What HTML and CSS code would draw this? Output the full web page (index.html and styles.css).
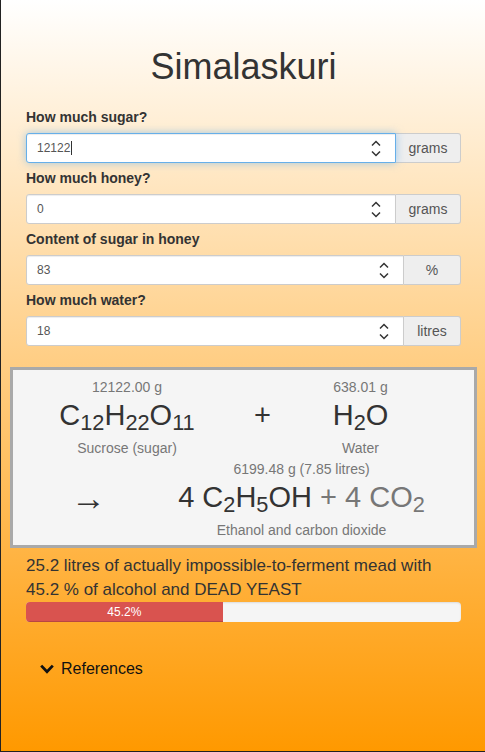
FILE: index.html
```html
<!DOCTYPE html>
<html lang="en">
<head>
<meta charset="utf-8">
<title>Simalaskuri</title>
<link rel="stylesheet" href="styles.css">
</head>
<body>
<div class="page">
  <div class="container">
    <h1 class="title">Simalaskuri</h1>

    <div class="group">
      <label class="label">How much sugar?</label>
      <div class="input-group">
        <div class="field focused">
          <span class="value">12122</span><span class="caret"></span>
          <span class="spacer"></span>
          <svg class="spin" width="10" height="17" viewBox="0 0 10 17"><polyline points="1,5.5 5,1.5 9,5.5"/><polyline points="1,11.5 5,15.5 9,11.5"/></svg>
        </div>
        <div class="addon addon-wide">grams</div>
      </div>
    </div>

    <div class="group">
      <label class="label">How much honey?</label>
      <div class="input-group">
        <div class="field">
          <span class="value">0</span>
          <span class="spacer"></span>
          <svg class="spin" width="10" height="17" viewBox="0 0 10 17"><polyline points="1,5.5 5,1.5 9,5.5"/><polyline points="1,11.5 5,15.5 9,11.5"/></svg>
        </div>
        <div class="addon addon-wide">grams</div>
      </div>
    </div>

    <div class="group">
      <label class="label">Content of sugar in honey</label>
      <div class="input-group">
        <div class="field">
          <span class="value">83</span>
          <span class="spacer"></span>
          <svg class="spin" width="10" height="17" viewBox="0 0 10 17"><polyline points="1,5.5 5,1.5 9,5.5"/><polyline points="1,11.5 5,15.5 9,11.5"/></svg>
        </div>
        <div class="addon">%</div>
      </div>
    </div>

    <div class="group">
      <label class="label">How much water?</label>
      <div class="input-group">
        <div class="field">
          <span class="value">18</span>
          <span class="spacer"></span>
          <svg class="spin" width="10" height="17" viewBox="0 0 10 17"><polyline points="1,5.5 5,1.5 9,5.5"/><polyline points="1,11.5 5,15.5 9,11.5"/></svg>
        </div>
        <div class="addon">litres</div>
      </div>
    </div>

    <div class="well">
      <div class="row row-top">
        <div class="col">
          <div class="amount">12122.00 g</div>
          <div class="formula">C<sub>12</sub>H<sub>22</sub>O<sub>11</sub></div>
          <div class="name">Sucrose (sugar)</div>
        </div>
        <div class="col">
          <div class="amount">&nbsp;</div>
          <div class="formula">+</div>
        </div>
        <div class="col">
          <div class="amount">638.01 g</div>
          <div class="formula">H<sub>2</sub>O</div>
          <div class="name">Water</div>
        </div>
      </div>
      <div class="row row-bottom">
        <div class="col">
          <div class="amount">&nbsp;</div>
          <div class="formula arrow">&rarr;</div>
        </div>
        <div class="col">
          <div class="amount">6199.48 g (7.85 litres)</div>
          <div class="formula">4 C<sub>2</sub>H<sub>5</sub>OH <span class="muted">+ 4 CO<sub>2</sub></span></div>
          <div class="name">Ethanol and carbon dioxide</div>
        </div>
      </div>
    </div>

    <p class="result">25.2 litres of actually impossible-to-ferment mead with 45.2 % of alcohol and DEAD YEAST</p>

    <div class="progress">
      <div class="bar" style="width: 45.2%">45.2%</div>
    </div>

    <div class="refs">
      <svg class="chevron" width="14" height="10" viewBox="0 0 14 10"><polyline points="1.2,1.6 7,7.8 12.8,1.6"/></svg>
      <span>References</span>
    </div>
  </div>
</div>
</body>
</html>
```

FILE: styles.css
```css
* {
  box-sizing: border-box;
}

html, body {
  margin: 0;
  padding: 0;
}

body {
  font-family: "Liberation Sans", Arial, sans-serif;
  color: #333;
  font-size: 14px;
  line-height: 20px;
}

.page {
  min-height: 752px;
  height: 752px;
  background: linear-gradient(to bottom, #ffffff 0%, #ff9900 100%);
  border-left: 1px solid #222;
  border-bottom: 1px solid #222;
  overflow: hidden;
}

.container {
  padding: 0 24px 0 25px;
}

.title {
  margin: 47px 0 20px;
  font-size: 36px;
  line-height: 40px;
  font-weight: 500;
  text-align: center;
  color: #333;
}

.group {
  margin-bottom: 5px;
}

.label {
  display: block;
  font-weight: bold;
  font-size: 14px;
  line-height: 20px;
  margin-bottom: 6px;
  color: #333;
}

.input-group {
  display: flex;
  height: 30px;
}

.field {
  flex: 1;
  display: flex;
  align-items: center;
  background: #fff;
  border: 1px solid #ccc;
  border-radius: 3px 0 0 3px;
  padding: 0 14px 0 10px;
  font-size: 12px;
  color: #555;
  box-shadow: inset 0 1px 1px rgba(0, 0, 0, 0.075);
}

.field.focused {
  border-color: #66afe9;
  box-shadow: inset 0 1px 1px rgba(0, 0, 0, 0.075), 0 0 8px rgba(102, 175, 233, 0.6);
  position: relative;
  z-index: 1;
}

.caret {
  display: inline-block;
  width: 1px;
  height: 14px;
  background: #333;
  margin-left: 1px;
}

.spacer {
  flex: 1;
}

.spin {
  display: block;
  fill: none;
  stroke: #333;
  stroke-width: 1.5;
}

.addon {
  width: 57px;
  display: flex;
  align-items: center;
  justify-content: center;
  background: #eee;
  border: 1px solid #ccc;
  border-left: 0;
  border-radius: 0 3px 3px 0;
  color: #555;
  font-size: 14px;
}

.addon-wide {
  width: 65px;
}

.well {
  margin: 21px -16px 0;
  background: #f5f5f5;
  border: 3px solid #a9a9a9;
  padding: 7px 0 5px;
}

.row {
  display: grid;
}

.row-top {
  grid-template-columns: 228px 43px 153px;
  margin-bottom: 1px;
}

.row-bottom {
  grid-template-columns: 151px 275px;
}

.col {
  text-align: center;
}

.amount,
.name {
  font-size: 14px;
  line-height: 20px;
  color: #777;
  white-space: nowrap;
}

.formula {
  font-size: 29px;
  line-height: 37px;
  margin-bottom: 4px;
  color: #333;
  white-space: nowrap;
}

.formula.arrow {
  font-size: 35px;
}

.formula sub {
  font-size: 75%;
  line-height: 0;
  position: relative;
  vertical-align: baseline;
  bottom: -0.25em;
}

.muted {
  color: #777;
}

.result {
  margin: 6px 0 0;
  font-size: 17px;
  line-height: 24px;
  color: #333;
}

.progress {
  height: 20px;
  background: #f5f5f5;
  border-radius: 4px;
  overflow: hidden;
  box-shadow: inset 0 1px 2px rgba(0, 0, 0, 0.1);
}

.bar {
  height: 100%;
  background: #d9534f;
  color: #fff;
  font-size: 12px;
  line-height: 20px;
  text-align: center;
  box-shadow: inset 0 -1px 0 rgba(0, 0, 0, 0.15);
}

.refs {
  margin-top: 36px;
  padding-left: 14px;
  display: flex;
  align-items: center;
  gap: 7px;
  font-size: 16px;
  line-height: 22px;
  color: #111;
}

.chevron {
  display: block;
  fill: none;
  stroke: #111;
  stroke-width: 2.8;
}
```
